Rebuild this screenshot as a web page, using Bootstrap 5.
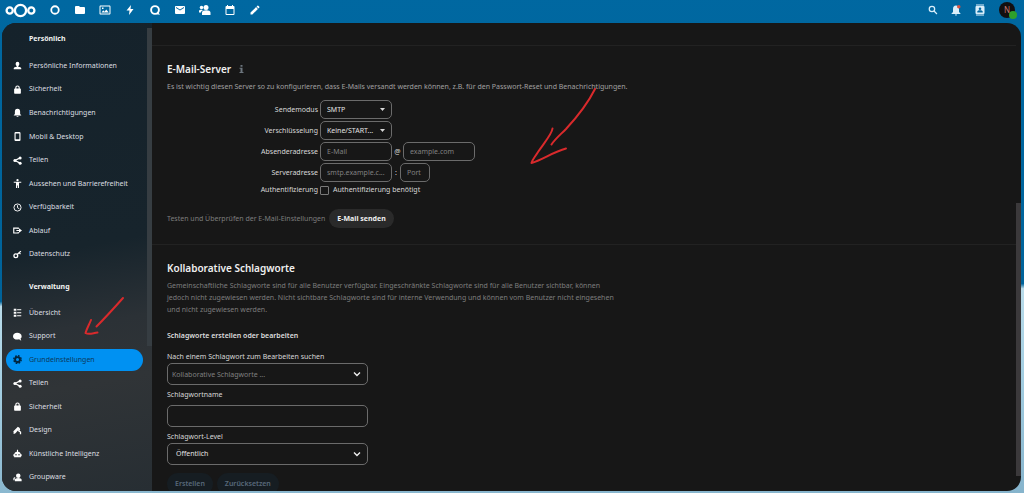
<!DOCTYPE html>
<html lang="de" data-bs-theme="dark">
<head>
<meta charset="utf-8">
<meta name="viewport" content="width=device-width, initial-scale=1">
<title>Grundeinstellungen</title>
<link href="https://cdn.jsdelivr.net/npm/bootstrap@5.3.0/dist/css/bootstrap.min.css" rel="stylesheet">
<style>
  body {
    font-family: "Noto Sans", "Open Sans", sans-serif;
    font-size: 7px;
    line-height: 12px;
    color: #d8d8d8;
    background: linear-gradient(179deg, #0068a1 0, #00639a 59%, #b9dbe9 60%, #a5cfe2 75%, #86b4cc 100%);
  }
  svg { display: block; fill: currentColor; flex: none; }
  .topbar { height: 24px; padding: 0 9px 3px 5px; color: #fff; }
  .topbar ul { gap: 13px; }
  .topbar a { color: inherit; }
  .apps { margin-left: 13px; }
  .topbar .tools { color: #d9eefa; }
  .avatar-disc { width: 16px; height: 16px; background: #120f10; font-size: 8px; line-height: 16px; }
  .topbar .avatar-disc { color: #c8786c; }
  .status-dot { width: 8px; height: 8px; right: -2px; bottom: -1px; background: #2fa02b; }

  .shell { margin: 0 3px 2px 2px; border-radius: 14px; background: #171717; }
  .sidebar { width: 150px; background: linear-gradient(170deg, #15222b 0, #17242c 48%, #2b3136 64%, #303437 76%, #272e33 100%); }
  .sidebar h2 { font-size: 7px; line-height: 12px; font-weight: 700; color: #f2f2f2; margin: 0; padding: 10px 0 9px 27px; }
  .sidebar h2 + ul { height: 212px; }
  .sidebar .admin-title { padding-top: 15px; padding-bottom: 8px; }
  .sidebar .admin-title + ul { height: 188px; }
  .sidebar ul { display: grid; align-items: center; margin: 0; padding: 0 9px 0 4px; list-style: none; }
  .entry { gap: 7px; height: 22px; padding-left: 7px; border-radius: 11px; color: #dcdfe1; text-decoration: none; }
  .entry svg { color: #fff; }
  .entry.active { background: #0091f2; color: #0c3a5c; }
  .entry.active svg { color: #00263f; }
  .thumb-side { top: 5px; right: 0; width: 5px; height: 68%; background: #363d42; }
  .thumb-main { top: 180px; right: 0; width: 5px; bottom: 15px; background: #3b393b; }

  .settings { padding-right: 5px; }
  .block { padding: 16px 15px; border-bottom: 1px solid #222; }
  .block-prev { height: 23px; padding: 0; }
  .block h2 { font-size: 10px; line-height: 14px; font-weight: 600; color: #efefef; margin: 0 0 5px; }
  .block h3 { font-size: 7px; line-height: 12px; font-weight: 600; color: #dedede; margin: 14px 0 9px; }
  .hint { color: #a0a0a0; margin: 0 0 7px; }
  .dim { color: #7d7d7d; }
  .narrow { max-width: 452px; margin-bottom: 0; }
  .mail-row { gap: 2px; margin-bottom: 2px; }
  .mail-row > .caption { width: 151px; text-align: right; }
  .test-row { margin-top: 13px; }
  .field {
    height: 19px; width: 72px; padding: 0 6px; font-size: 7px; line-height: 12px; color: #e2e2e2;
    background: transparent; border: 1px solid #6b6b6b; border-radius: 5px; appearance: none; outline: 0;
  }
  .field::placeholder { color: #808080; opacity: 1; }
  .field option { background: #171717; }
  .port { width: 30px; }
  .sep { width: 7px; text-align: center; }
  .sep-port { width: 4px; }
  .caret { right: 7px; top: 8px; pointer-events: none; }
  .tick { width: 9px; height: 9px; margin: 0 2px 0 0; appearance: none; border: 1px solid #7a7a7a; border-radius: 1px; background: transparent; }
  .tick:checked { background: #0091f2; }
  .pill { height: 19px; padding: 0 8px; border: 0; border-radius: 11px; font-size: 7px; line-height: 12px; font-weight: 700; background: #2a2a2a; color: #f0f0f0; }
  .tags { width: 201px; }
  .tags .field { width: 100%; height: 22px; padding: 0 8px; }
  .tags .field.search { padding: 0 4px; }
  .tags .chev { right: 6px; top: 6px; pointer-events: none; color: #eee; }
  .tags .pill { height: 22px; background: #161d22; color: #58697a; font-weight: 600; }
  .ink { fill: none; stroke: #d92a2c; stroke-width: 2; stroke-linecap: round; stroke-linejoin: round; pointer-events: none; }
  .ink-side { left: 82px; top: 273px; }
  .ink-main { left: 376px; top: 65px; }
</style>
</head>
<body class="vh-100 overflow-hidden d-flex flex-column">

<header class="topbar d-flex align-items-center">
  <a href="#" aria-label="Startseite"><svg width="31" height="15" viewBox="0 0 31 15"><g fill="none" stroke="#fff" stroke-width="2.3"><circle cx="4.7" cy="7.5" r="3.1"/><circle cx="15.5" cy="7.5" r="5.6"/><circle cx="26.3" cy="7.5" r="3.1"/></g></svg></a>
  <ul class="apps list-unstyled d-flex align-items-center mb-0">
    <li><a href="#" aria-label="Dashboard"><svg width="12" height="12" viewBox="0 0 24 24"><circle cx="12" cy="12" r="7.5" fill="none" stroke="#fff" stroke-width="3.6"/></svg></a></li>
    <li><a href="#" aria-label="Dateien"><svg width="12" height="12" viewBox="0 0 24 24"><path d="M10 4H4a2 2 0 0 0-2 2v12a2 2 0 0 0 2 2h16a2 2 0 0 0 2-2V8a2 2 0 0 0-2-2h-8z"/></svg></a></li>
    <li><a href="#" aria-label="Fotos"><svg width="12" height="12" viewBox="0 0 24 24"><path d="M21 3H3C2 3 1 4 1 5v14c0 1.100.9 2 2 2h18c1 0 2-1 2-2V5c0-1-1-2-2-2zm0 16H3V5h18v14zM8.500 12.500l2.500 3 3.500-4.500 5 6H5zM6 7h3v3H6z"/></svg></a></li>
    <li><a href="#" aria-label="Aktivität"><svg width="12" height="12" viewBox="0 0 24 24"><path d="M14 2 5 13h6l-1 9 9-12h-6z"/></svg></a></li>
    <li><a href="#" aria-label="Talk"><svg width="12" height="12" viewBox="0 0 24 24"><circle cx="12" cy="12" r="7.800" fill="none" stroke="#fff" stroke-width="3.800"/><path d="M17 15l5 6.500-7-1z"/></svg></a></li>
    <li><a href="#" aria-label="E-Mail"><svg width="12" height="12" viewBox="0 0 24 24"><path d="m20 8-8 5-8-5V6l8 5 8-5m0-2H4c-1.110 0-2 .890-2 2v12a2 2 0 0 0 2 2h16a2 2 0 0 0 2-2V6a2 2 0 0 0-2-2z"/></svg></a></li>
    <li><a href="#" aria-label="Kontakte"><svg width="12" height="12" viewBox="0 0 24 24"><circle cx="14" cy="7" r="5"/><circle cx="5" cy="7" r="3.500"/><path d="M6 22v-5c0-3 4-4.500 8.500-4.500S23 14 23 17v5zM0 17v-3c0-2 3-3 6-2.500l2 1c-3 1-4 2.500-4 4.500z"/></svg></a></li>
    <li><a href="#" aria-label="Kalender"><svg width="12" height="12" viewBox="0 0 24 24"><path d="M19 4h-1V2h-2v2H8V2H6v2H5a2 2 0 0 0-2 2v14a2 2 0 0 0 2 2h14a2 2 0 0 0 2-2V6a2 2 0 0 0-2-2zm0 16H5V10h14v10z"/></svg></a></li>
    <li><a href="#" aria-label="Notizen"><svg width="12" height="12" viewBox="0 0 24 24"><path d="M20.700 7c.4-.4.4-1 0-1.400l-2.300-2.300c-.4-.4-1-.4-1.400 0l-1.900 1.800 3.800 3.800M3 17.200V21h3.800L17.800 9.900l-3.700-3.700z"/></svg></a></li>
  </ul>
  <ul class="tools list-unstyled d-flex align-items-center mb-0 ms-auto">
    <li><a href="#" aria-label="Suche"><svg width="10" height="10" viewBox="0 0 24 24"><g fill="none" stroke="currentColor" stroke-width="3"><circle cx="9.500" cy="9.500" r="6.500"/><path d="m14.500 14.500 7 7"/></g></svg></a></li>
    <li><a href="#" aria-label="Benachrichtigungen"><svg width="10" height="12" viewBox="0 0 20 24"><path d="M10 3c4 0 6 3 6 7v6l3 3v1H1v-1l3-3v-6c0-4 2-7 6-7zM8 21h4c0 3-4 3-4 0z"/><circle cx="15.500" cy="5.500" r="3.500" fill="#d9503f"/></svg></a></li>
    <li><a href="#" aria-label="Kontakte suchen"><svg width="12" height="12" viewBox="0 0 24 24"><path fill-rule="evenodd" d="M4 1h16v2H4zm0 20h16v2H4zM5 4h14a2 2 0 0 1 2 2v12a2 2 0 0 1-2 2H5a2 2 0 0 1-2-2V6c0-1 1-2 2-2zm7 2.800a2.600 2.600 0 1 0 0 5.200 2.600 2.600 0 0 0 0-5.200zM6.500 17h11v-1.500c0-2-3.500-2.800-5.500-2.800s-5.500.8-5.500 2.800z"/></svg></a></li>
    <li><a href="#" class="avatar-disc d-block position-relative rounded-circle text-center text-decoration-none">N<span class="status-dot position-absolute rounded-circle"></span></a></li>
  </ul>
</header>

<div class="shell d-flex flex-fill overflow-hidden position-relative">
  <nav class="sidebar flex-shrink-0 position-relative overflow-hidden" aria-label="Einstellungen">
    <h2>Persönlich</h2>
    <ul>
      <li><a href="#" class="entry d-flex align-items-center"><svg width="9" height="9" viewBox="0 0 24 24"><path d="M12 2a5 5 0 0 1 5 5c0 3-1.500 5-3 6v2c4 .5 8 2 8 4v3H2v-3c0-2 4-3.500 8-4v-2c-1.500-1-3-3-3-6a5 5 0 0 1 5-5z"/></svg>Persönliche Informationen</a></li>
      <li><a href="#" class="entry d-flex align-items-center"><svg width="9" height="9" viewBox="0 0 24 24"><path fill-rule="evenodd" d="M12 1a6 6 0 0 0-6 6v2H5a2 2 0 0 0-2 2v10a2 2 0 0 0 2 2h14a2 2 0 0 0 2-2V11a2 2 0 0 0-2-2h-1V7a6 6 0 0 0-6-6zm0 3a3 3 0 0 1 3 3v2H9V7a3 3 0 0 1 3-3z"/></svg>Sicherheit</a></li>
      <li><a href="#" class="entry d-flex align-items-center"><svg width="9" height="9" viewBox="0 0 24 24"><path d="M12 2c5 0 7 3 7 8v6l3 3v1H2v-1l3-3v-6c0-5 2-8 7-8zM9 21h6c-1 3-5 3-6 0z"/></svg>Benachrichtigungen</a></li>
      <li><a href="#" class="entry d-flex align-items-center"><svg width="9" height="9" viewBox="0 0 24 24"><path fill-rule="evenodd" d="M7 0h10a3 3 0 0 1 3 3v18a3 3 0 0 1-3 3H7a3 3 0 0 1-3-3V3a3 3 0 0 1 3-3zm0 4v15h10V4z"/></svg>Mobil &amp; Desktop</a></li>
      <li><a href="#" class="entry d-flex align-items-center"><svg width="9" height="9" viewBox="0 0 24 24"><path d="m19 5-14 7 14 7" fill="none" stroke="currentColor" stroke-width="3"/><circle cx="19" cy="5" r="4"/><circle cx="5" cy="12" r="4"/><circle cx="19" cy="19" r="4"/></svg>Teilen</a></li>
      <li><a href="#" class="entry d-flex align-items-center"><svg width="9" height="9" viewBox="0 0 24 24"><path d="M2 7h20v3h-6v14h-3v-7h-2v7H8V10H2z"/><circle cx="12" cy="3" r="3"/></svg>Aussehen und Barrierefreiheit</a></li>
      <li><a href="#" class="entry d-flex align-items-center"><svg width="9" height="9" viewBox="0 0 24 24"><g fill="none" stroke="currentColor" stroke-width="2.500"><circle cx="12" cy="12" r="9.500"/><path d="M12 6v6.500l5 3"/></g></svg>Verfügbarkeit</a></li>
      <li><a href="#" class="entry d-flex align-items-center"><svg width="9" height="9" viewBox="0 0 24 24"><path d="M14 8V5.500H2v13h12V16" fill="none" stroke="currentColor" stroke-width="3"/><path d="M9 10.500h7V6l8 6-8 6v-4.500H9z"/></svg>Ablauf</a></li>
      <li><a href="#" class="entry d-flex align-items-center"><svg width="9" height="9" viewBox="0 0 24 24"><g fill="none" stroke="currentColor" stroke-width="3.500"><circle cx="7.500" cy="15.500" r="5"/><path d="M11 12 21 3M16 7l4 4"/></g></svg>Datenschutz</a></li>
    </ul>
    <h2 class="admin-title">Verwaltung</h2>
    <ul>
      <li><a href="#" class="entry d-flex align-items-center"><svg width="9" height="9" viewBox="0 0 24 24"><path d="M2 2h7v5H2zm0 8h7v5H2zm0 8h7v5H2zM11 3h11v3H11zm0 8h11v3H11zm0 8h11v3H11z"/></svg>Übersicht</a></li>
      <li><a href="#" class="entry d-flex align-items-center"><svg width="9" height="9" viewBox="0 0 24 24"><path d="M11 2c7 0 12 4 12 9 0 3-1 5-3 6.500l2 5.500-6-3.500c-9 2-16-2-16-8.500 0-5 5-9 11-9z"/></svg>Support</a></li>
      <li><a href="#" class="entry active d-flex align-items-center" aria-current="page"><svg width="9" height="9" viewBox="0 0 24 24"><circle cx="12" cy="12" r="6.500" fill="none" stroke="currentColor" stroke-width="5"/><circle cx="12" cy="12" r="9.800" fill="none" stroke="currentColor" stroke-width="4" stroke-dasharray="4.500 3.200"/></svg>Grundeinstellungen</a></li>
      <li><a href="#" class="entry d-flex align-items-center"><svg width="9" height="9" viewBox="0 0 24 24"><path d="m19 5-14 7 14 7" fill="none" stroke="currentColor" stroke-width="3"/><circle cx="19" cy="5" r="4"/><circle cx="5" cy="12" r="4"/><circle cx="19" cy="19" r="4"/></svg>Teilen</a></li>
      <li><a href="#" class="entry d-flex align-items-center"><svg width="9" height="9" viewBox="0 0 24 24"><path fill-rule="evenodd" d="M12 1a6 6 0 0 0-6 6v2H5a2 2 0 0 0-2 2v10a2 2 0 0 0 2 2h14a2 2 0 0 0 2-2V11a2 2 0 0 0-2-2h-1V7a6 6 0 0 0-6-6zm0 3a3 3 0 0 1 3 3v2H9V7a3 3 0 0 1 3-3z"/></svg>Sicherheit</a></li>
      <li><a href="#" class="entry d-flex align-items-center"><svg width="9" height="9" viewBox="0 0 24 24"><path d="M1 14 13 2l6 4-9 9c-2 3-4 5-9 6 2-2 0-4 0-7z"/><path d="m18 8-3 5 5 3v6" fill="none" stroke="currentColor" stroke-width="3.500"/></svg>Design</a></li>
      <li><a href="#" class="entry d-flex align-items-center"><svg width="9" height="9" viewBox="0 0 24 24"><path fill-rule="evenodd" d="M10.500 2h3v5c4 0 7 3 7 7H23v5h-2v3H3v-3H1v-5h2.500c0-4 3-7 7-7zM8 13a2 2 0 1 0 0 4 2 2 0 0 0 0-4zm8 0a2 2 0 1 0 0 4 2 2 0 0 0 0-4z"/></svg>Künstliche Intelligenz</a></li>
      <li><a href="#" class="entry d-flex align-items-center"><svg width="9" height="9" viewBox="0 0 24 24"><circle cx="14" cy="7" r="6"/><path d="M5 22v-4c0-3 4-5 9-5s9 2 9 5v4zM1 19v-5c0-2 2-3 6-3-2 2-3 4-3 8z"/></svg>Groupware</a></li>
    </ul>
    <span class="thumb-side position-absolute"></span>
  </nav>

  <main class="settings flex-fill overflow-hidden position-relative">
    <section class="block block-prev"></section>

    <section class="block">
      <h2 class="d-flex align-items-center gap-2">E-Mail-Server
        <a href="#" class="text-secondary" aria-label="Dokumentation"><svg width="5" height="8" viewBox="0 0 10 16"><path d="M3 0h4v3.500H3zM1 5.500h6V14h2v2H1v-2h2V7.500H1z"/></svg></a></h2>
      <p class="hint">Es ist wichtig diesen Server so zu konfigurieren, dass E-Mails versandt werden können, z.B. für den Passwort-Reset und Benachrichtigungen.</p>
      <form>
        <div class="mail-row d-flex align-items-center">
          <label class="caption" for="mode">Sendemodus</label>
          <div class="position-relative"><select id="mode" class="field"><option>SMTP</option></select><svg class="caret position-absolute" width="5" height="3" viewBox="0 0 10 6"><path d="M0 0h10L5 6z"/></svg></div>
        </div>
        <div class="mail-row d-flex align-items-center">
          <label class="caption" for="crypt">Verschlüsselung</label>
          <div class="position-relative"><select id="crypt" class="field"><option>Keine/START...</option></select><svg class="caret position-absolute" width="5" height="3" viewBox="0 0 10 6"><path d="M0 0h10L5 6z"/></svg></div>
        </div>
        <div class="mail-row d-flex align-items-center">
          <label class="caption" for="from">Absenderadresse</label>
          <input id="from" class="field" type="text" placeholder="E-Mail"><span class="sep">@</span><input class="field" type="text" placeholder="example.com" aria-label="Domain">
        </div>
        <div class="mail-row d-flex align-items-center">
          <label class="caption" for="host">Serveradresse</label>
          <input id="host" class="field" type="text" placeholder="smtp.example.c..."><span class="sep sep-port">:</span><input class="field port" type="text" placeholder="Port" aria-label="Port">
        </div>
        <div class="mail-row d-flex align-items-center">
          <span class="caption">Authentifizierung</span>
          <input id="auth" class="tick" type="checkbox"><label for="auth">Authentifizierung benötigt</label>
        </div>
        <div class="test-row d-flex align-items-center gap-1">
          <span class="dim">Testen und Überprüfen der E-Mail-Einstellungen</span>
          <button type="button" class="pill">E-Mail senden</button>
        </div>
      </form>
    </section>

    <section class="block">
      <h2>Kollaborative Schlagworte</h2>
      <p class="narrow dim">Gemeinschaftliche Schlagworte sind für alle Benutzer verfügbar. Eingeschränkte Schlagworte sind für alle Benutzer sichtbar, können jedoch nicht zugewiesen werden. Nicht sichtbare Schlagworte sind für interne Verwendung und können vom Benutzer nicht eingesehen und nicht zugewiesen werden.</p>
      <h3>Schlagworte erstellen oder bearbeiten</h3>
      <form class="tags">
        <label class="d-block" for="find">Nach einem Schlagwort zum Bearbeiten suchen</label>
        <div class="position-relative mb-1"><input id="find" class="field search" type="text" placeholder="Kollaborative Schlagworte ..."><svg class="chev position-absolute" width="10" height="10" viewBox="0 0 10 10"><path d="m2 3.500 3 3 3-3" fill="none" stroke="currentColor" stroke-width="1.400"/></svg></div>
        <label class="d-block mb-1" for="tagname">Schlagwortname</label>
        <input id="tagname" class="field d-block mb-1" type="text">
        <label class="d-block" for="level">Schlagwort-Level</label>
        <div class="position-relative mb-2"><select id="level" class="field"><option>Öffentlich</option></select><svg class="chev position-absolute" width="10" height="10" viewBox="0 0 10 10"><path d="m2 3.500 3 3 3-3" fill="none" stroke="currentColor" stroke-width="1.400"/></svg></div>
        <div class="d-flex gap-1">
          <button type="button" class="pill">Erstellen</button>
          <button type="button" class="pill">Zurücksetzen</button>
        </div>
      </form>
    </section>

    <svg class="ink ink-main position-absolute" width="72" height="78" viewBox="528 88 72 78"><path d="M595 89C589 101 578 116 566 129 560 135 555 139 551.500 144.500M552.500 128.500C552 134 544 143 538 152 535 157 532.500 159 531.500 163M531.500 163C542 160 553 152 566 148.500"/></svg>
    <span class="thumb-main position-absolute"></span>
  </main>
  <svg class="ink ink-side position-absolute" width="44" height="42" viewBox="84 296 44 42"><path d="M123 298C115 307 106 317 96.500 326.500M91 320C89 325 87 328 85.500 333M85.500 333C89 335 93 333 97.500 332.500"/></svg>
</div>

<script src="https://cdn.jsdelivr.net/npm/bootstrap@5.3.0/dist/js/bootstrap.bundle.min.js"></script>
</body>
</html>
